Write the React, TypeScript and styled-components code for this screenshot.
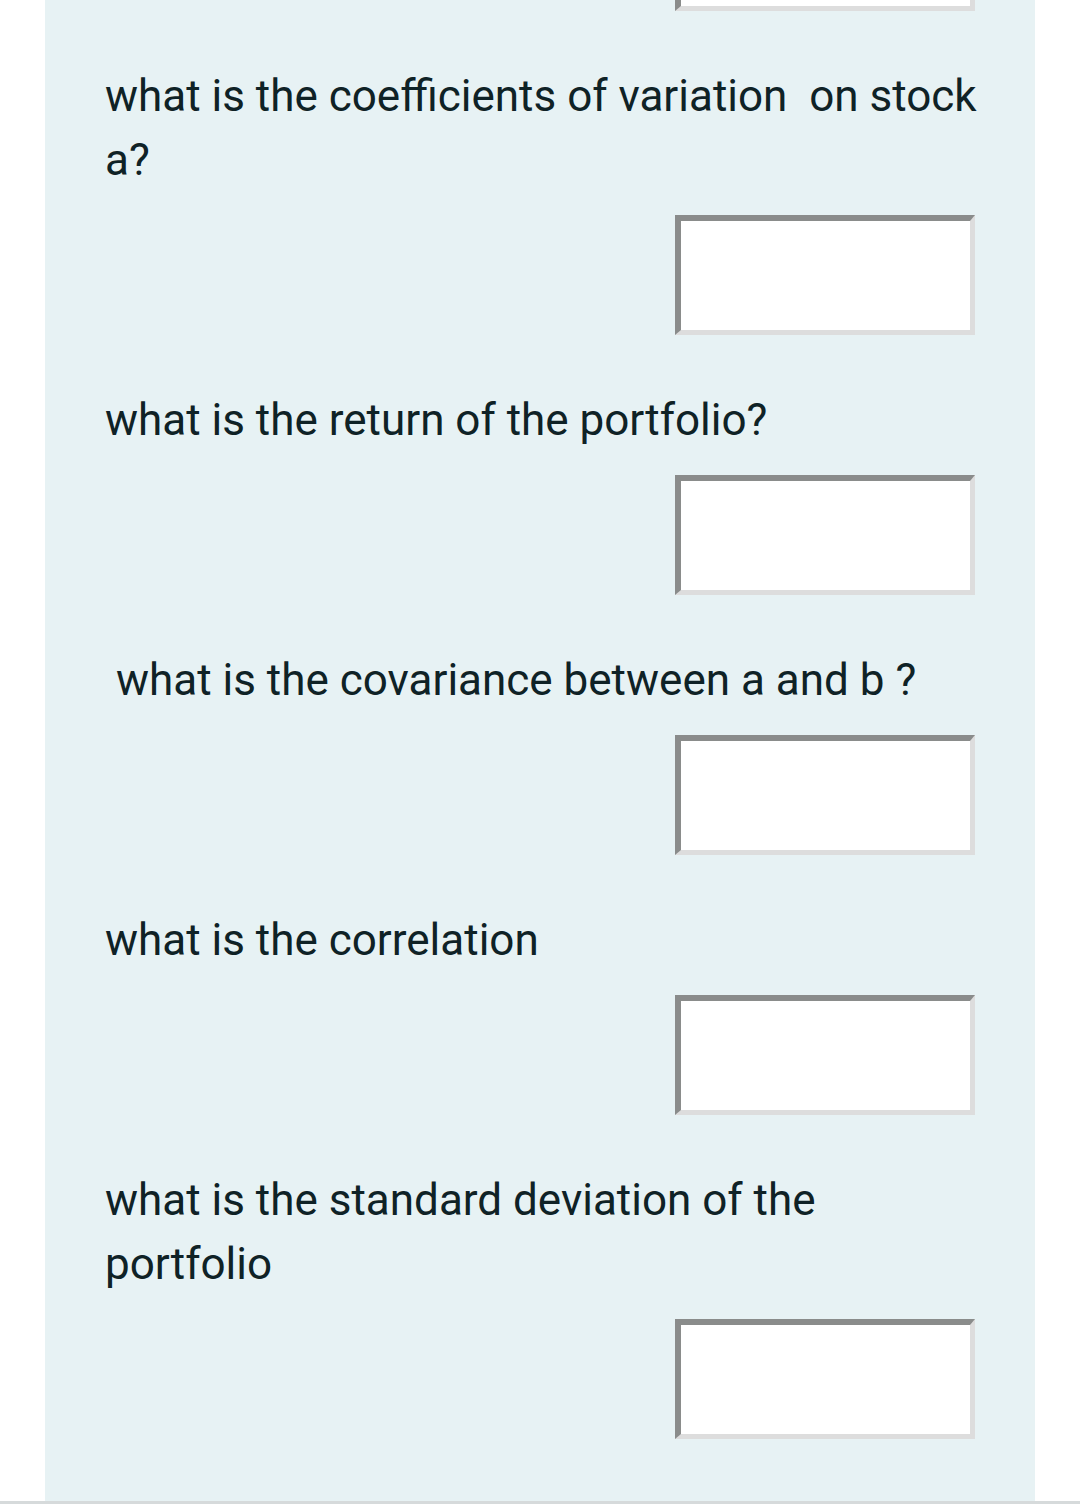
import React from "react";
import styled, { createGlobalStyle } from "styled-components";

const GlobalStyle = createGlobalStyle`
  html, body {
    margin: 0;
    padding: 0;
    background: #ffffff;
  }
  body {
    font-family: Roboto, "Noto Sans", sans-serif;
  }
`;

const Page = styled.div`
  width: 1080px;
  height: 1504px;
  overflow: hidden;
  display: flex;
  flex-direction: column;
`;

const Panel = styled.div`
  margin-left: 45px;
  width: 990px;
  height: 1501px;
  background: #e7f2f4;
  overflow: hidden;
  padding: 0 60px;
  box-sizing: border-box;
`;

const Rule = styled.div`
  height: 3px;
  background: #d6dadb;
`;

const List = styled.div`
  margin-top: -109px;
  display: flex;
  flex-direction: column;
`;

const Question = styled.div<{ $indent?: number }>`
  font-size: 44px;
  line-height: 64px;
  color: #0f2226;
  padding-left: ${(p) => p.$indent ?? 0}px;
  margin: 53px -10px 23px 0;
`;

const Answer = styled.input`
  align-self: flex-end;
  width: 300px;
  height: 120px;
  box-sizing: border-box;
  border-style: solid;
  border-width: 6px 5px 5px 6px;
  border-color: #8a8c8b #dddddd #dddddd #8a8c8b;
  background: #ffffff;
  outline: none;
  padding: 0 10px;
  font-size: 36px;
  font-family: Roboto, sans-serif;
`;

const questions = [
  { text: "what is the coefficients of variation\u00a0 on stock a?" },
  { text: "what is the return of the portfolio?" },
  { text: "what is the covariance between a and b ?", indent: 11 },
  { text: "what is the correlation" },
  { text: "what is the standard deviation of the portfolio" },
];

export default function App() {
  return (
    <>
      <GlobalStyle />
      <Page>
        <Panel>
          <List>
            <Answer aria-label="previous answer" />
            {questions.map((q, i) => (
              <React.Fragment key={i}>
                <Question $indent={q.indent}>{q.text}</Question>
                <Answer aria-label={q.text} />
              </React.Fragment>
            ))}
          </List>
        </Panel>
        <Rule />
      </Page>
    </>
  );
}
